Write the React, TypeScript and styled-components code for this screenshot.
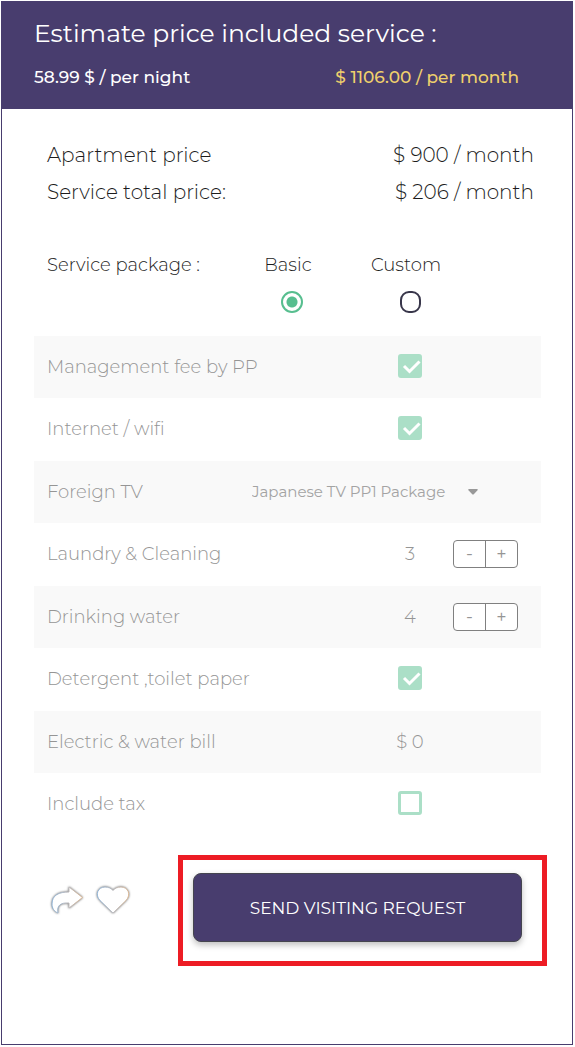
import React, { useState } from "react";
import styled, { createGlobalStyle, css } from "styled-components";

const purple = "#483d6e";
const green = "#57be8f";
const paleGreen = "#abdfc7";
const muted = "#959595";

const GlobalStyle = createGlobalStyle`
  *, *::before, *::after { box-sizing: border-box; }
  body { margin: 0; background: #fff; }
  body, button, input, select {
    font-family: Montserrat, Inter, "Open Sans", sans-serif;
    font-weight: 300;
  }
`;

const Card = styled.main`
  margin: 1px 2px 2px 1px;
  border: 1px solid ${purple};
  background: #fff;
  color: #1c1c1c;
`;

const Header = styled.header`
  padding: 15px 53px 20px 32px;
  background: ${purple};
  color: #fff;
`;

const Title = styled.h1`
  margin: 0 0 16px;
  font-size: 25px;
  line-height: 32px;
  font-weight: 400;
`;

const Rates = styled.div`
  display: flex;
  justify-content: space-between;
  font-size: 17px;
  line-height: 24px;
  font-weight: 500;
`;

const Rate = styled.span<{ $accent?: boolean }>`
  color: ${(p) => (p.$accent ? "#efd06c" : "#fff")};
`;

const Body = styled.form`
  padding: 28px 31px 0 32px;
`;

const Totals = styled.dl`
  margin: 0;
  padding: 0 7px 0 13px;
`;

const TotalLine = styled.div`
  display: flex;
  justify-content: space-between;
  font-size: 20px;
  line-height: 37px;
`;

const TotalName = styled.dt``;

const TotalValue = styled.dd`
  margin: 0;
`;

const columns = css`
  display: grid;
  grid-template-columns: minmax(0, 1fr) 86px 65px;
  align-items: center;
  padding: 0 23px 1px 13px;
`;

const PackagePicker = styled.fieldset`
  display: grid;
  grid-template-columns: minmax(0, 1fr) 98px 138px 39px;
  margin: 0;
  border: 0;
  padding: 41px 23px 23px 13px;
  font-size: 18px;
  line-height: 26px;
`;

const PackageOption = styled.label`
  display: flex;
  flex-direction: column;
  align-items: center;
  gap: 13px;
`;

const PackageName = styled.span`
  padding-right: 8px;
`;

const Radio = styled.input`
  appearance: none;
  margin: 0;
  width: 21px;
  height: 22px;
  border: 2px solid #38364a;
  border-radius: 9px;
  &:checked {
    width: 22px;
    border-color: ${green};
    border-radius: 50%;
    background: radial-gradient(circle, ${green} 5px, transparent 6px);
  }
`;

const Services = styled.div`
  color: ${muted};
  font-size: 18px;
`;

const ServiceRow = styled.div`
  ${columns}
  height: 63px;
  &:nth-child(odd) {
    height: 62px;
    background: #f9f9f9;
  }
`;

const ServiceName = styled.label`
  white-space: nowrap;
`;

const Value = styled.output`
  text-align: center;
`;

const CheckCell = styled.span`
  position: relative;
  display: block;
  justify-self: center;
  width: 24px;
  height: 24px;
  margin-bottom: 2px;
`;

const Tick = styled.svg`
  position: absolute;
  inset: 0;
  pointer-events: none;
`;

const Checkbox = styled.input`
  appearance: none;
  display: block;
  margin: 0;
  width: 24px;
  height: 24px;
  border: 3px solid ${paleGreen};
  border-radius: 3px;
  background: #fff;
  &:checked { background: ${paleGreen}; }
  &:not(:checked) + ${Tick} { display: none; }
`;

const SelectRow = styled(ServiceRow)`
  grid-template-columns: minmax(0, 1fr) 232px;
  padding-right: 57px;
`;

const SelectCell = styled.span`
  position: relative;
`;

const Select = styled.select`
  appearance: none;
  display: block;
  width: 100%;
  border: 0;
  padding: 0 24px 0 0;
  background: transparent;
  color: #a3a3a3;
  font-size: 15px;
  line-height: 24px;
  font-weight: 400;
`;

const Caret = styled.svg`
  position: absolute;
  top: 9px;
  right: 6px;
  pointer-events: none;
`;

const Stepper = styled.div`
  display: flex;
  height: 28px;
  border: 1px solid #808080;
  border-radius: 4px;
  background: #fff;
`;

const StepButton = styled.button`
  flex: 1;
  border: 0;
  padding: 0;
  background: none;
  color: ${muted};
  font-size: 18px;
  line-height: 24px;
  font-weight: 400;
  & + & { border-left: 1px solid #808080; }
`;

const Actions = styled.footer`
  display: flex;
  align-items: flex-start;
  padding: 19px 25px 78px 48px;
`;

const IconButton = styled.button`
  width: 46px;
  height: 46px;
  margin-top: 22px;
  border: 0;
  padding: 0;
  background: none;
`;

const Icon = styled.svg`
  display: block;
  filter: drop-shadow(0 0 1px rgba(0, 0, 0, 0.6));
`;

const Highlight = styled.div`
  flex: 1;
  margin-left: 36px;
  border: 5px solid #ed1c24;
  padding: 13px 20px 19px 10px;
`;

const SubmitButton = styled.button`
  display: block;
  width: 100%;
  height: 69px;
  border: 1px solid #45454f;
  border-radius: 8px;
  background: ${purple};
  box-shadow: 0 3px 6px rgba(0, 0, 0, 0.25);
  color: #fff;
  font-size: 17px;
  font-weight: 400;
`;

function OutlineIcon({ id, path }: { id: string; path: string }) {
  return (
    <Icon width="46" height="46" viewBox="0 0 46 46" aria-hidden="true">
      <defs>
        <linearGradient id={id}>
          <stop offset="0" stopColor="#8fb4d8" />
          <stop offset="0.5" stopColor="#bdbdc2" />
          <stop offset="1" stopColor="#dcb894" />
        </linearGradient>
      </defs>
      <path d={path} fill="#fff" stroke={`url(#${id})`} strokeLinejoin="round" />
    </Icon>
  );
}

function CheckRow({ id, name, initial }: { id: string; name: string; initial: boolean }) {
  return (
    <ServiceRow>
      <ServiceName htmlFor={id}>{name}</ServiceName>
      <CheckCell>
        <Checkbox id={id} type="checkbox" defaultChecked={initial} />
        <Tick width="24" height="24" viewBox="0 0 24 24" fill="none" aria-hidden="true">
          <path d="M6 12l5.500 5.500L21.500 7.500" stroke="#fff" strokeWidth="3" />
        </Tick>
      </CheckCell>
    </ServiceRow>
  );
}

function CountRow({ id, name, initial }: { id: string; name: string; initial: number }) {
  const [count, setCount] = useState(initial);
  return (
    <ServiceRow>
      <ServiceName htmlFor={id}>{name}</ServiceName>
      <Value id={id}>{count}</Value>
      <Stepper>
        <StepButton type="button" aria-label={`Less ${name}`} onClick={() => setCount(Math.max(0, count - 1))}>
          -
        </StepButton>
        <StepButton type="button" aria-label={`More ${name}`} onClick={() => setCount(count + 1)}>
          +
        </StepButton>
      </Stepper>
    </ServiceRow>
  );
}

export default function App() {
  return (
    <>
      <GlobalStyle />
      <Card>
        <Header>
          <Title>Estimate price included service :</Title>
          <Rates>
            <Rate>58.99 $ / per night</Rate>
            <Rate $accent>$ 1106.00 / per month</Rate>
          </Rates>
        </Header>
        <Body>
          <Totals>
            <TotalLine>
              <TotalName>Apartment price</TotalName>
              <TotalValue>$ 900 / month</TotalValue>
            </TotalLine>
            <TotalLine>
              <TotalName>Service total price:</TotalName>
              <TotalValue>$ 206 / month</TotalValue>
            </TotalLine>
          </Totals>
          <PackagePicker>
            <span>Service package :</span>
            <PackageOption>
              <PackageName>Basic</PackageName>
              <Radio type="radio" name="package" value="basic" defaultChecked />
            </PackageOption>
            <PackageOption>
              <PackageName>Custom</PackageName>
              <Radio type="radio" name="package" value="custom" />
            </PackageOption>
          </PackagePicker>
          <Services>
            <CheckRow id="management" name="Management fee by PP" initial />
            <CheckRow id="internet" name="Internet / wifi" initial />
            <SelectRow>
              <ServiceName htmlFor="tv">Foreign TV</ServiceName>
              <SelectCell>
                <Select id="tv">
                  <option>Japanese TV PP1 Package</option>
                </Select>
                <Caret width="10" height="6" viewBox="0 0 10 6" aria-hidden="true">
                  <path d="M1 0h8q1.500 0 .5 1.200L6 5q-1 1-2 0L.5 1.200Q-.5 0 1 0z" fill="#999" />
                </Caret>
              </SelectCell>
            </SelectRow>
            <CountRow id="laundry" name="Laundry & Cleaning" initial={3} />
            <CountRow id="water" name="Drinking water" initial={4} />
            <CheckRow id="detergent" name="Detergent ,toilet paper" initial />
            <ServiceRow>
              <ServiceName htmlFor="bill">Electric & water bill</ServiceName>
              <Value id="bill">$ 0</Value>
            </ServiceRow>
            <CheckRow id="tax" name="Include tax" initial={false} />
          </Services>
        </Body>
        <Actions>
          <IconButton type="button" aria-label="Share">
            <OutlineIcon
              id="share-edge"
              path="M19 10L32.500 20.500L19 31V26C11 25.500 6.500 28 8 36C4 34.500 2 31 2 27C2 18 9 15 19 15Z"
            />
          </IconButton>
          <IconButton type="button" aria-label="Save to favourites">
            <OutlineIcon
              id="heart-edge"
              path="M17 36L4 23.500C-1.500 17.500 2 10 9 10C12.500 10 15.500 11.500 17 13.500C18.500 11.500 21.500 10 25 10C32 10 35.500 17.500 30 23.500Z"
            />
          </IconButton>
          <Highlight>
            <SubmitButton type="button">SEND VISITING REQUEST</SubmitButton>
          </Highlight>
        </Actions>
      </Card>
    </>
  );
}
